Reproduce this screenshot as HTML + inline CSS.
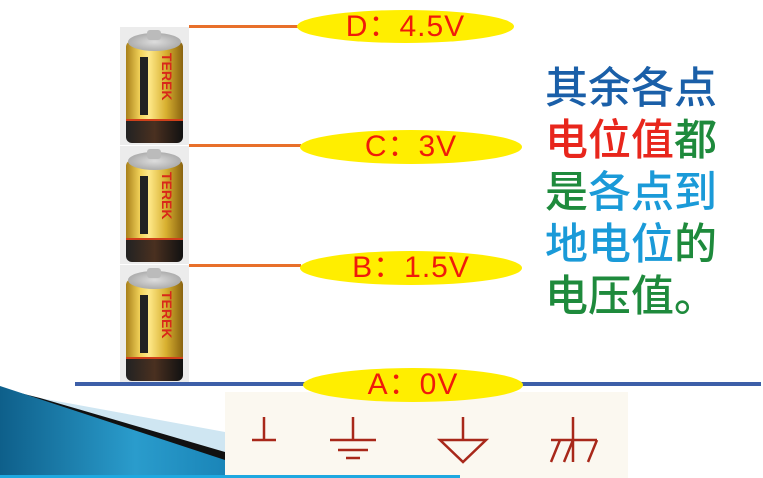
<!DOCTYPE html>
<html><head><meta charset="utf-8"><style>
html,body{margin:0;width:763px;height:478px;overflow:hidden}
body{background:#fff;position:relative;font-family:"Liberation Sans","Noto Sans CJK SC",sans-serif}
.abs{position:absolute}
.ell{position:absolute;z-index:5;background:#ffee00;border-radius:50%;color:#f01a0a;font-size:30px;text-align:center;font-family:"Liberation Sans Narrow","Liberation Sans","Noto Sans CJK SC",sans-serif;letter-spacing:1px}
.wire{position:absolute;height:3px;background:#e8702a}
.bat{position:absolute;width:69px;height:118px;background:#ececec}
.bat .body{position:absolute;left:6px;top:14px;width:57px;height:100px;border-radius:6px;background:linear-gradient(90deg,#a8801a,#f3d35a 25%,#ffe98a 40%,#d8b030 70%,#8a6410)}
.bat .cap{position:absolute;left:8px;top:6px;width:53px;height:18px;border-radius:50%;background:radial-gradient(#ddd,#999)}
.bat .nub{position:absolute;left:27px;top:3px;width:14px;height:10px;border-radius:3px;background:#bbb}
.bat .bot{position:absolute;left:6px;top:92px;width:57px;height:22px;border-radius:0 0 6px 6px;background:linear-gradient(90deg,#222,#4a3020 50%,#111);border-top:2px solid #d0401a}
.bat .lab{position:absolute;left:20px;top:30px;width:8px;height:58px;background:#222}
.bat .brand{position:absolute;left:38px;top:26px;width:18px;font-size:14px;color:#d8281a;font-weight:bold;writing-mode:vertical-rl;line-height:18px}
.t{position:absolute;left:545px;font-size:43px;font-weight:500;line-height:52px;font-family:"Noto Sans CJK SC",sans-serif;white-space:nowrap}
</style></head><body>

<div class="bat" style="left:120px;top:27px"><div class="body"></div><div class="cap"></div><div class="nub"></div><div class="bot"></div><div class="lab"></div><div class="brand">TEREK</div></div>
<div class="bat" style="left:120px;top:146px"><div class="body"></div><div class="cap"></div><div class="nub"></div><div class="bot"></div><div class="lab"></div><div class="brand">TEREK</div></div>
<div class="bat" style="left:120px;top:265px"><div class="body"></div><div class="cap"></div><div class="nub"></div><div class="bot"></div><div class="lab"></div><div class="brand">TEREK</div></div>

<div class="wire" style="left:189px;top:25px;width:112px"></div>
<div class="wire" style="left:189px;top:144px;width:112px"></div>
<div class="wire" style="left:189px;top:264px;width:112px"></div>

<div class="abs" style="left:75px;top:382px;width:686px;height:4px;background:#3d5fa8"></div>

<div class="ell" style="left:297px;top:10px;width:217px;height:33px;line-height:33px">D：4.5V</div>
<div class="ell" style="left:300px;top:130px;width:222px;height:34px;line-height:34px">C：3V</div>
<div class="ell" style="left:300px;top:251px;width:222px;height:34px;line-height:34px">B：1.5V</div>
<div class="ell" style="left:303px;top:368px;width:220px;height:34px;line-height:34px">A：0V</div>

<div class="t" style="top:59px"><span style="color:#1a5fa8">其余各点</span></div>
<div class="t" style="top:111px"><span style="color:#e8261c">电位值</span><span style="color:#1e8a3c">都</span></div>
<div class="t" style="top:163px"><span style="color:#1e8a3c">是</span><span style="color:#1a9ad8">各点到</span></div>
<div class="t" style="top:215px"><span style="color:#1a9ad8">地电位</span><span style="color:#1e8a3c">的</span></div>
<div class="t" style="top:267px"><span style="color:#1e8a3c">电压值。</span></div>

<svg class="abs" style="left:0;top:380px" width="763" height="98">
<defs><linearGradient id="g" x1="0" y1="0" x2="1" y2="0"><stop offset="0" stop-color="#0e5f8a"/><stop offset="0.6" stop-color="#2a9ccc"/><stop offset="1" stop-color="#1a85b8"/></linearGradient></defs>
<polygon points="40,18 225,52 225,78 0,78 0,8" fill="#cfe6f2"/>
<polygon points="40,18 225,72 225,82 0,82 0,8" fill="#111"/>
<polygon points="0,6 225,80 225,98 0,98" fill="url(#g)"/>
<rect x="225" y="12" width="403" height="86" fill="#fbf8f0"/>
<rect x="0" y="95" width="460" height="3" fill="#1ea8e0"/>
<g stroke="#a8281a" stroke-width="2.5" fill="none" transform="translate(0,-380)">
<path d="M264,417V440M252,440H276"/>
<path d="M353,417V440M330,440H376M338,450H368M346,458H360"/>
<path d="M463,417V440M440,440H486L463,462Z"/>
<path d="M573,417V462M551,440H597M560,440L551,462M573,440L564,462M597,440L588,462"/>
</g>
</svg>
</body></html>
